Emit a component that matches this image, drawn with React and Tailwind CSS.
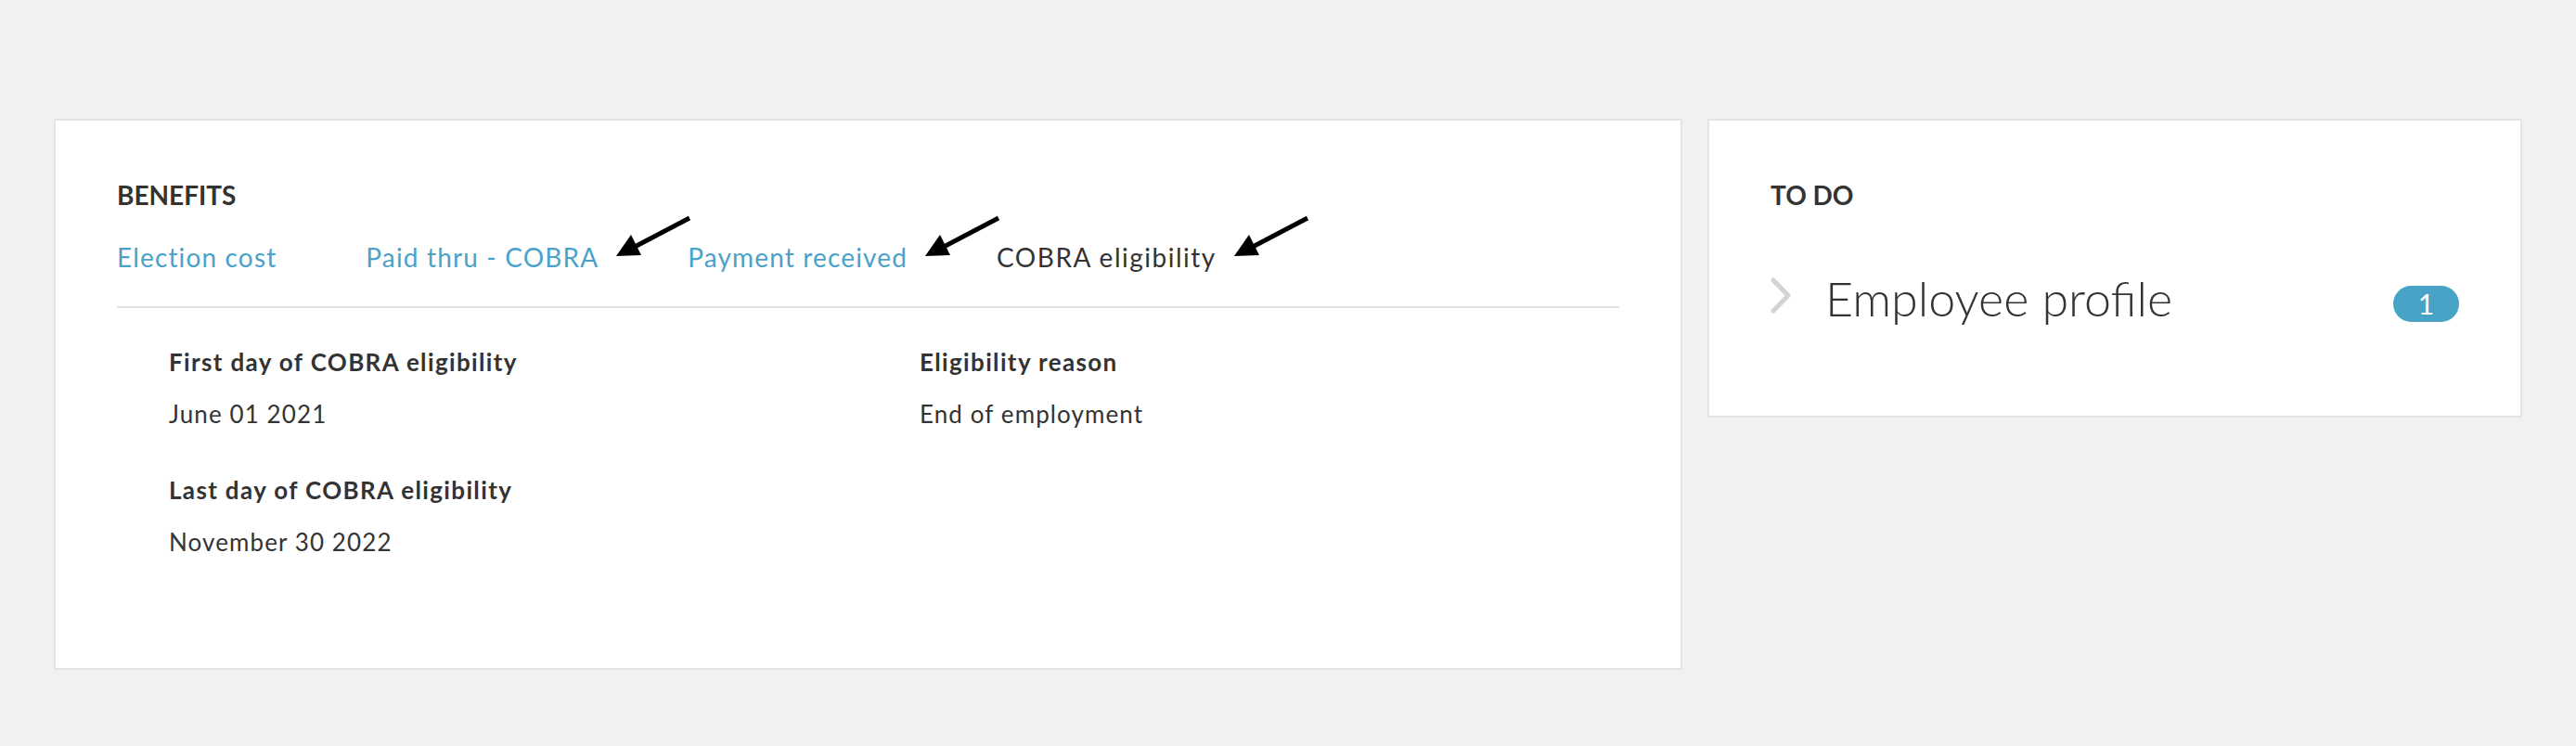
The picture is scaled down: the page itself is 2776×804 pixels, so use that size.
import React from "react";

const Arrow = () => (
  <svg
    className="absolute left-[calc(100%+17px)] top-[-30px]"
    width="90"
    height="52"
    viewBox="0 0 90 52"
  >
    <line x1="20" y1="37" x2="81" y2="5" stroke="#000" strokeWidth="5" />
    <polygon points="2,46 18,23 29,45" fill="#000" />
  </svg>
);

const tabs = [
  { label: "Election cost", active: false, arrow: false },
  { label: "Paid thru - COBRA", active: false, arrow: true },
  { label: "Payment received", active: false, arrow: true },
  { label: "COBRA eligibility", active: true, arrow: true },
];

const Field = ({ label, value }) => (
  <div>
    <div className="text-[26px] leading-[32px] font-bold tracking-[1.35px] text-[#333]">
      {label}
    </div>
    <div className="mt-[24px] text-[26px] leading-[32px] tracking-[1.1px] text-[#333]">
      {value}
    </div>
  </div>
);

const App = () => {
  return (
    <div className="min-h-[804px] bg-[#f1f1f1] pt-[128px] pl-[58px] font-[Lato,sans-serif]">
      <div className="flex items-start gap-[27px]">
        {/* benefits card */}
        <div className="w-[1755px] h-[594px] bg-white border-2 border-[#e4e4e4] px-[66px] pt-[63px]">
          <h2 className="text-[28px] leading-[34px] font-bold text-[#333] uppercase">
            Benefits
          </h2>
          <div className="mt-[33px] flex gap-[96px] text-[28px] leading-[34px]">
            {tabs.map((t) => (
              <span
                key={t.label}
                className={
                  t.active
                    ? "relative text-[#333] tracking-[1.5px]"
                    : "relative text-[#4aa2c9] tracking-[1.15px]"
                }
              >
                {t.label}
                {t.arrow && <Arrow />}
              </span>
            ))}
          </div>
          <div className="mt-[36px] h-[2px] bg-[#e2e2e2]" />
          <div className="pl-[56px] pt-[42px]">
            <div className="grid grid-cols-[809px_1fr]">
              <Field label="First day of COBRA eligibility" value="June 01 2021" />
              <Field label="Eligibility reason" value="End of employment" />
            </div>
            <div className="mt-[50px]">
              <Field label="Last day of COBRA eligibility" value="November 30 2022" />
            </div>
          </div>
        </div>

        {/* to do card */}
        <div className="w-[878px] h-[322px] bg-white border-2 border-[#e4e4e4] px-[66px] pt-[63px]">
          <h2 className="text-[28px] leading-[34px] font-bold text-[#333] uppercase">
            To do
          </h2>
          <div className="mt-[63px] flex items-center h-[62px]">
            <svg width="23" height="39" viewBox="0 0 23 39" className="mb-[6px] shrink-0">
              <polyline
                points="3,3 19,19.5 3,36"
                fill="none"
                stroke="#d3d3d3"
                strokeWidth="5"
                strokeLinecap="round"
                strokeLinejoin="round"
              />
            </svg>
            <span className="ml-[36px] flex-1 text-[52px] leading-[62px] font-light text-[#333]">
              Employee profile
            </span>
            <span className="mt-[13px] w-[71px] h-[39px] rounded-full bg-[#48a3c7] text-white text-[30px] leading-[39px] text-center">
              1
            </span>
          </div>
        </div>
      </div>
    </div>
  );
};

export default App;
